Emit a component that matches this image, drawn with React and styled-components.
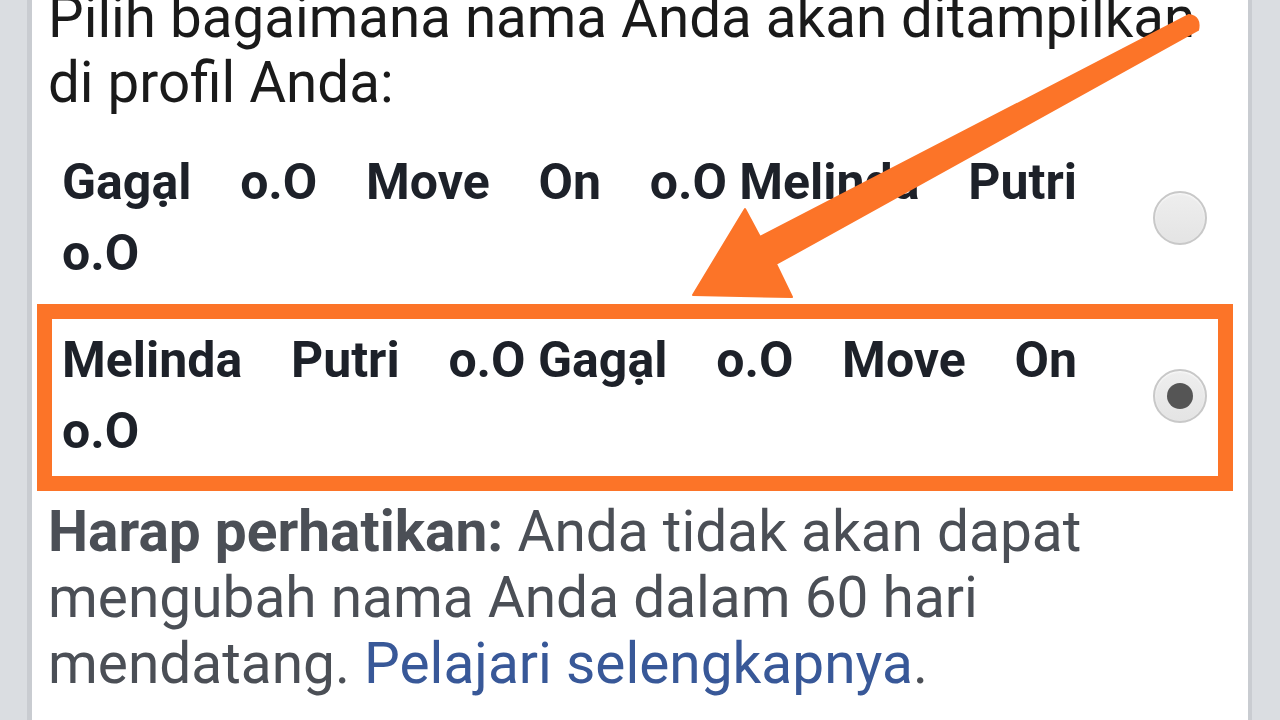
import React from "react";
import styled, { createGlobalStyle } from "styled-components";

const GlobalStyle = createGlobalStyle`
  html, body {
    margin: 0;
    padding: 0;
    height: 720px;
    overflow: hidden;
    background: #dadde1;
  }
  * {
    box-sizing: border-box;
  }
`;

// baris pertama dipaksa patah sebelum kata terakhir, lalu diratakan kanan-kiri
const options = [
  { first: "Gagạl o.O Move On", join: "o.O Melinda", rest: "Putri", tail: "o.O", checked: false },
  { first: "Melinda Putri", join: "o.O Gagạl", rest: "o.O Move On", tail: "o.O", checked: true },
];

const App = () => {
  return (
    <Page>
      <GlobalStyle />
      <Panel>
        <Heading>Pilih bagaimana nama Anda akan ditampilkan di profil Anda:</Heading>
        <OptionList>
          {options.map((opt, index) => (
            <OptionRow key={index}>
              <OptionLabel>
                {opt.first} <Joined>{opt.join}</Joined> {opt.rest}
                <br />
                {opt.tail}
              </OptionLabel>
              <Radio checked={opt.checked} />
            </OptionRow>
          ))}
        </OptionList>
        <Note>
          <strong>Harap perhatikan:</strong> Anda tidak akan dapat mengubah nama
          Anda dalam 60 hari mendatang. <NoteLink href="#">Pelajari selengkapnya</NoteLink>.
        </Note>
      </Panel>

      {/* coretan anotasi di atas screenshot */}
      <Highlight />
      <Arrow viewBox="0 0 1280 720" width="1280" height="720">
        <path
          d="M1189 15 Q1201 17 1198 30 L776 264 L792 297 L693 295 L745 209 L760 237 Z"
          fill="#fc7428"
          stroke="#fc7428"
          strokeWidth="2"
          strokeLinejoin="round"
        />
      </Arrow>
    </Page>
  );
};

const Page = styled.div`
  position: relative;
  width: 1280px;
  height: 720px;
  overflow: hidden;
  font-family: Roboto, "Liberation Sans", sans-serif;
`;

const Panel = styled.div`
  display: flow-root;
  width: 1225px;
  height: 720px;
  margin-left: 27px;
  background: #ffffff;
  border-left: 5px solid #c9ccd1;
  border-right: 4px solid #c9ccd1;
  padding: 0 0 0 16px;
`;

const Heading = styled.p`
  margin: -14px 0 13px 0;
  font-size: 56.5px;
  line-height: 65px;
  color: #1a1a1a;
  width: 1180px;
`;

const OptionList = styled.div`
  display: flex;
  flex-direction: column;
`;

const OptionRow = styled.label`
  display: flex;
  align-items: center;
  gap: 76px;
  padding: 18px 41px 18px 14px;
`;

const OptionLabel = styled.div`
  flex: 1;
  font-size: 50px;
  font-weight: 700;
  line-height: 71px;
  color: #1d2129;
  text-align: justify;
  text-align-last: justify;
`;

const Joined = styled.span`
  display: inline-block;
  white-space: nowrap;
`;

const Radio = styled.span`
  position: relative;
  flex: none;
  width: 54px;
  height: 54px;
  border-radius: 50%;
  border: 2px solid #c8c8c8;
  background: linear-gradient(180deg, #eeeeee 0%, #e4e4e4 100%);
  box-shadow: inset 0 1px 2px rgba(255, 255, 255, 0.8);
  &::after {
    content: "";
    display: ${(p) => (p.checked ? "block" : "none")};
    position: absolute;
    left: 50%;
    top: 50%;
    width: 26px;
    height: 26px;
    margin: -13px 0 0 -13px;
    border-radius: 50%;
    background: #555555;
  }
`;

const Note = styled.p`
  margin: 14px 0 0 0;
  font-size: 56.8px;
  line-height: 66px;
  color: #4b4f56;
  width: 1100px;
  strong {
    font-weight: 700;
  }
`;

const NoteLink = styled.a`
  color: #385898;
  text-decoration: none;
`;

const Highlight = styled.div`
  position: absolute;
  left: 37px;
  top: 304px;
  width: 1196px;
  height: 187px;
  border: 15px solid #fc7428;
  pointer-events: none;
`;

const Arrow = styled.svg`
  position: absolute;
  left: 0;
  top: 0;
  pointer-events: none;
`;

export default App;
